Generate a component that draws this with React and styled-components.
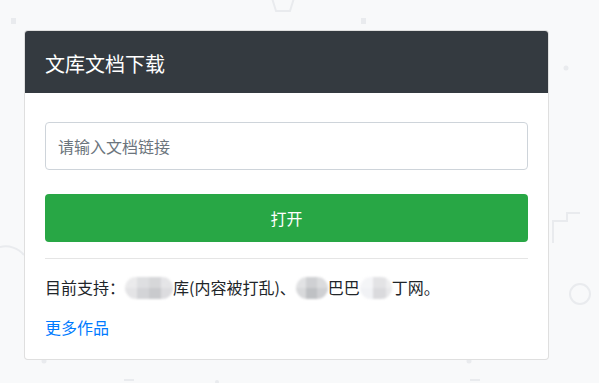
import React from 'react'
import styled, { createGlobalStyle } from "styled-components";

const GlobalStyle = createGlobalStyle`
  html, body {
    margin: 0;
    padding: 0;
    background: #f8f9fa;
    font-family: "Noto Sans CJK SC", "Noto Sans", sans-serif;
    color: #212529;
  }
`;

const Page = styled.div`
  position: relative;
  width: 599px;
  height: 383px;
  overflow: hidden;
  padding-top: 30px;
  box-sizing: border-box;
`;

const Decor = styled.svg`
  position: absolute;
  left: 0;
  top: 0;
  pointer-events: none;
`;

const Card = styled.div`
  position: relative;
  margin-left: 24px;
  width: 525px;
  background: #fff;
  border: 1px solid rgba(0, 0, 0, 0.125);
  border-radius: 4px;
  overflow: hidden;
  box-sizing: border-box;
`;

const Header = styled.div`
  height: 62px;
  background: #343a40;
  color: #fff;
  display: flex;
  align-items: center;
  padding: 3px 20px 0;
  box-sizing: border-box;
  font-size: 20px;
  line-height: 24px;
`;

const Body = styled.div`
  padding: 29px 20px 20px;
`;

const Input = styled.input`
  display: block;
  width: 100%;
  height: 48px;
  box-sizing: border-box;
  padding: 0 12px;
  border: 1px solid #ced4da;
  border-radius: 4px;
  font-family: inherit;
  font-size: 16px;
  color: #495057;
  outline: none;
  &::placeholder {
    color: #6c757d;
  }
`;

const Button = styled.button`
  display: block;
  width: 100%;
  height: 48px;
  margin-top: 24px;
  border: none;
  border-radius: 4px;
  background: #28a745;
  color: #fff;
  font-family: inherit;
  font-size: 16px;
  cursor: pointer;
`;

const Rule = styled.hr`
  margin: 16px 0 16px;
  border: 0;
  border-top: 1px solid rgba(0, 0, 0, 0.1);
`;

const Support = styled.p`
  margin: 0 0 16px;
  font-size: 16px;
  line-height: 24px;
  white-space: nowrap;
`;

const Mosaic = styled.span`
  display: inline-block;
  width: ${(p) => p.$w}px;
  height: 22px;
  vertical-align: -5px;
  border-radius: 11px;
  background:
    linear-gradient(to bottom, rgba(255,255,255,0.25) 0 50%, transparent 50% 100%),
    linear-gradient(to right, ${(p) => p.$c});
  filter: blur(1.2px);
`;

const More = styled.a`
  display: inline-block;
  font-size: 16px;
  line-height: 24px;
  color: #007bff;
  text-decoration: none;
`;

const App = () => {
  return (
    <>
      <GlobalStyle />
      <Page>
        <Decor width="599" height="383" viewBox="0 0 599 383">
          <g fill="none" stroke="#e9ebee" strokeWidth="2">
            <path d="M272 -2 L276 11 L290 11 L294 -2" />
            <path d="M0 17 A24 24 0 0 1 24 25" transform="translate(0 230)" />
            <path d="M553 238 L553 216 L567 216 L567 208 L580 208" transform="translate(0 5)" />
            <circle cx="580" cy="294" r="10" />
            <path d="M124 380 L134 380" />
            <path d="M470 380 L480 380" />
          </g>
          <g fill="#e9ebee">
            <rect x="11" y="18" width="5" height="6" />
            <rect x="361" y="18" width="5" height="6" />
            <circle cx="566" cy="68" r="2.5" />
            <circle cx="44" cy="361" r="2.5" />
            <circle cx="469" cy="361" r="2.5" />
            <circle cx="217" cy="382" r="2" />
          </g>
        </Decor>
        <Card>
          <Header>文库文档下载</Header>
          <Body>
            <Input placeholder="请输入文档链接" />
            <Button>打开</Button>
            <Rule />
            <Support>
              目前支持：<Mosaic $w={48} $c="#e4e4e6 0 25%, #d3d4d7 25% 50%, #c9cacd 50% 75%, #dcdcdf 75% 100%" />库(内容被打乱)、<Mosaic $w={32} $c="#d8d9db 0 30%, #bfc1c4 30% 65%, #cfd0d3 65% 100%" />巴巴<Mosaic $w={32} $c="#f1f2f5 0 40%, #dadadd 40% 80%, #e8e8ea 80% 100%" />丁网。
            </Support>
            <More href="#">更多作品</More>
          </Body>
        </Card>
      </Page>
    </>
  )
}

export default App
